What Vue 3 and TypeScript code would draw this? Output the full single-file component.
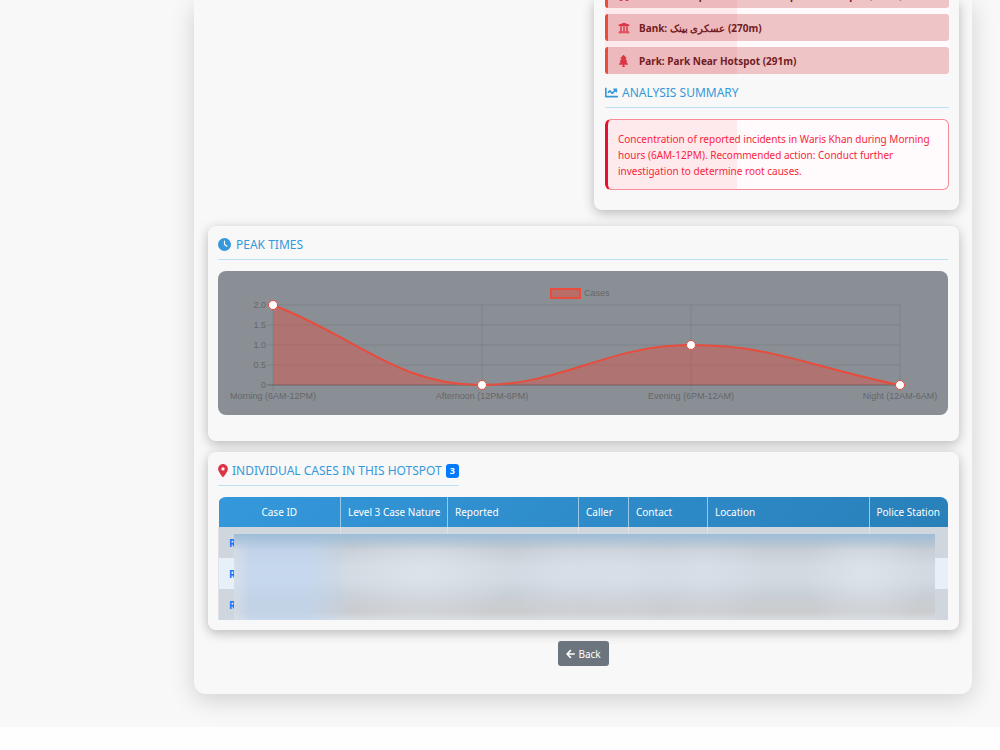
<script setup lang="ts">
interface Place {
  kind: string
  name: string
  distance: string
  viewBox: string
  icon: string
}

const places: Place[] = [
  {
    kind: 'Public Transport',
    name: 'Main Bus Stop Near Hotspot',
    distance: '250m',
    viewBox: '0 0 512 512',
    icon: 'M488 128h-8V80c0-44.800-99.200-80-224-80S32 35.200 32 80v48h-8c-13.250 0-24 10.740-24 24v80c0 13.250 10.750 24 24 24h8v160c0 17.670 14.330 32 32 32v32c0 17.670 14.330 32 32 32h64c17.670 0 32-14.330 32-32v-32h128v32c0 17.670 14.330 32 32 32h64c17.670 0 32-14.330 32-32v-32c17.670 0 32-14.330 32-32V256h8c13.250 0 24-10.750 24-24v-80c0-13.260-10.750-24-24-24zM112 400c-17.670 0-32-14.330-32-32s14.330-32 32-32 32 14.330 32 32-14.330 32-32 32zm16-112c-17.670 0-32-14.330-32-32V128c0-17.670 14.330-32 32-32h256c17.670 0 32 14.330 32 32v128c0 17.670-14.330 32-32 32H128zm272 112c-17.670 0-32-14.330-32-32s14.330-32 32-32 32 14.330 32 32-14.330 32-32 32z',
  },
  {
    kind: 'Bank',
    name: 'عسکری بینک',
    distance: '270m',
    viewBox: '0 0 512 512',
    icon: 'M496 128v16a8 8 0 0 1-8 8h-24v12c0 6.627-5.373 12-12 12H60c-6.627 0-12-5.373-12-12v-12H24a8 8 0 0 1-8-8v-16a8 8 0 0 1 4.941-7.392l232-88a7.996 7.996 0 0 1 6.118 0l232 88A8 8 0 0 1 496 128zm-24 304H40c-13.255 0-24 10.745-24 24v16a8 8 0 0 0 8 8h464a8 8 0 0 0 8-8v-16c0-13.255-10.745-24-24-24zM96 192v192H60c-6.627 0-12 5.373-12 12v20h416v-20c0-6.627-5.373-12-12-12h-36V192h-64v192h-64V192h-64v192h-64V192H96z',
  },
  {
    kind: 'Park',
    name: 'Park Near Hotspot',
    distance: '291m',
    viewBox: '0 0 384 512',
    icon: 'M378.31 378.49L298.42 288h30.63c9.01 0 16.98-5 20.78-13.06 3.8-8.04 2.55-17.26-3.28-24.05L268.42 160h28.89c9.1 0 17.3-5.35 20.86-13.61 3.52-8.13 1.86-17.59-4.24-24.08L203.66 4.83c-6.03-6.45-17.28-6.45-23.32 0L70.06 122.31c-6.1 6.49-7.75 15.95-4.24 24.08C69.38 154.65 77.59 160 86.69 160h28.89l-78.14 90.91c-5.81 6.78-7.06 15.99-3.27 24.04C37.97 283 45.93 288 54.95 288h30.63L5.69 378.49c-6 6.79-7.36 16.09-3.56 24.26 3.75 8.05 12 13.25 21.01 13.25H160v24.45l-30.29 48.4c-5.32 10.64 2.42 23.16 14.31 23.16h95.96c11.89 0 19.63-12.52 14.31-23.16L224 440.45V416h136.86c9.01 0 17.26-5.2 21.01-13.25 3.8-8.17 2.44-17.47-3.56-24.26z',
  },
]

const plot = { left: 55, right: 682, top: 34, bottom: 114 }
const ticks = ['2.0', '1.5', '1.0', '0.5', '0'].map((label, i) => ({
  label,
  y: plot.top + i * 20,
}))
const points = [
  { label: 'Morning (6AM-12PM)', x: 55, y: 34 },
  { label: 'Afternoon (12PM-6PM)', x: 264, y: 114 },
  { label: 'Evening (6PM-12AM)', x: 473, y: 74 },
  { label: 'Night (12AM-6AM)', x: 682, y: 114 },
]
const curve =
  'M55 34C139 66 178 114 264 114C345 114 389 74 473 74C557 74 598 98 682 114'

const columns = [
  { label: 'Case ID', cls: 'c-id' },
  { label: 'Level 3 Case Nature', cls: 'c-nature' },
  { label: 'Reported', cls: 'c-reported' },
  { label: 'Caller', cls: 'c-caller' },
  { label: 'Contact', cls: 'c-contact' },
  { label: 'Location', cls: 'c-location' },
  { label: 'Police Station', cls: 'c-station' },
]
const cases = [1, 2, 3]
</script>

<template>
  <div class="page">
    <main class="shell">
      <div class="top">
        <section class="card side">
          <ul class="places">
            <li v-for="p in places" :key="p.kind" class="place">
              <span class="place-icon">
                <svg :viewBox="p.viewBox" aria-hidden="true"><path :d="p.icon" /></svg>
              </span>
              <span>{{ p.kind }}: <bdi>{{ p.name }}</bdi> ({{ p.distance }})</span>
            </li>
          </ul>
          <h2 class="heading">
            <svg class="h-icon" viewBox="0 0 512 512" aria-hidden="true">
              <path d="M496 384H64V80c0-8.840-7.160-16-16-16H16C7.160 64 0 71.160 0 80v336c0 17.670 14.330 32 32 32h464c8.840 0 16-7.160 16-16v-32c0-8.840-7.160-16-16-16zM464 96H345.940c-21.380 0-32.090 25.850-16.970 40.970l32.400 32.400L288 242.750l-73.370-73.370c-12.500-12.500-32.760-12.500-45.250 0l-68.690 68.690c-6.250 6.250-6.250 16.380 0 22.630l22.620 22.620c6.250 6.250 16.380 6.250 22.630 0L192 237.250l73.370 73.370c12.500 12.500 32.760 12.500 45.250 0l96-96 32.400 32.400c15.120 15.120 40.970 4.410 40.970-16.970V112c.010-8.840-7.150-16-15.990-16z" />
            </svg>
            <span>ANALYSIS SUMMARY</span>
          </h2>
          <p class="summary">
            Concentration of reported incidents in Waris Khan during Morning hours (6AM-12PM).
            Recommended action: Conduct further investigation to determine root causes.
          </p>
        </section>
      </div>

      <section class="card peak">
        <h2 class="heading roomy">
          <svg class="h-icon" viewBox="0 0 512 512" aria-hidden="true">
            <path d="M256 0a256 256 0 1 1 0 512A256 256 0 1 1 256 0zM232 120V256c0 8 4 15.500 10.700 20l96 64c11 7.400 25.900 4.400 33.300-6.700s4.400-25.900-6.700-33.300L280 243.200V120c0-13.300-10.700-24-24-24s-24 10.700-24 24z" />
          </svg>
          <span>PEAK TIMES</span>
        </h2>
        <div class="chart">
          <svg viewBox="0 0 730 144" role="img" aria-label="Cases by time of day">
            <g class="grid">
              <line v-for="t in ticks" :key="t.label" x1="49" :x2="plot.right" :y1="t.y" :y2="t.y" />
              <line v-for="p in points" :key="p.label" :x1="p.x" :x2="p.x" :y1="plot.top" y2="120" />
            </g>
            <path class="area" :d="curve + 'L55 114Z'" />
            <line class="axis" x1="49" :x2="plot.right" :y1="plot.bottom" :y2="plot.bottom" />
            <path class="line" :d="curve" />
            <circle v-for="p in points" :key="p.label" class="dot" :cx="p.x" :cy="p.y" r="4.500" />
            <rect class="swatch" x="333" y="18" width="29" height="9" />
            <g class="labels">
              <text x="366" y="25">Cases</text>
              <text v-for="t in ticks" :key="t.label" x="48" :y="t.y + 3" text-anchor="end">{{ t.label }}</text>
              <text v-for="p in points" :key="p.label" :x="p.x" y="128" text-anchor="middle">{{ p.label }}</text>
            </g>
          </svg>
        </div>
      </section>

      <section class="card">
        <h2 class="heading fit">
          <svg class="pin" viewBox="0 0 384 512" aria-hidden="true">
            <path d="M215.700 499.200C267 435 384 279.400 384 192C384 86 298 0 192 0S0 86 0 192c0 87.400 117 243 168.300 307.200c12.300 15.300 35.100 15.300 47.400 0zM192 128a64 64 0 1 1 0 128 64 64 0 1 1 0-128z" />
          </svg>
          <span>INDIVIDUAL CASES IN THIS HOTSPOT</span>
          <span class="badge">3</span>
        </h2>
        <div class="table-box">
          <table>
            <thead>
              <tr>
                <th v-for="c in columns" :key="c.label" :class="c.cls" scope="col">{{ c.label }}</th>
              </tr>
            </thead>
            <tbody>
              <tr v-for="n in cases" :key="n">
                <td><a href="#">R</a></td>
                <td v-for="c in columns.slice(1)" :key="c.label"></td>
              </tr>
            </tbody>
          </table>
          <div class="redacted"></div>
        </div>
      </section>

      <button type="button" class="back">
        <svg viewBox="0 0 448 512" aria-hidden="true">
          <path d="M257.500 445.100l-22.200 22.200c-9.400 9.400-24.600 9.400-33.900 0L7 273c-9.400-9.400-9.400-24.600 0-33.900L201.400 44.700c9.400-9.400 24.600-9.400 33.900 0l22.200 22.200c9.500 9.500 9.300 25-.4 34.300L136.600 216H424c13.300 0 24 10.700 24 24v32c0 13.300-10.700 24-24 24H136.600l120.500 114.800c9.800 9.300 10 24.800.4 34.300z" />
        </svg>
        <span>Back</span>
      </button>
    </main>
  </div>
</template>

<style>
body {
  margin: 0;
  background: #fefefe;
}
</style>

<style scoped>
* {
  box-sizing: border-box;
}
.page {
  overflow: hidden;
  padding: 0 28px 33px 194px;
  background: #f8f8f8;
  font-family: 'Noto Sans', 'Open Sans', sans-serif;
  font-size: 11px;
}
.shell {
  display: flex;
  flex-direction: column;
  padding: 0 13px 28px 14px;
  border-radius: 0 0 12px 12px;
  background: #f8f8f8;
  box-shadow: 0 6px 24px rgba(0, 0, 0, 0.16);
}
.top {
  display: flex;
  justify-content: flex-end;
  margin-bottom: 16px;
}
.card {
  padding: 10px 11px 10px 10px;
  margin-bottom: 11px;
  border-radius: 8px;
  background: #f8f8f8;
  box-shadow: 0 3px 12px rgba(0, 0, 0, 0.26);
}
.side {
  width: 365px;
  margin: 0;
  padding: 0 10px 20px 11px;
  border-radius: 0 0 8px 8px;
}
.peak {
  padding-bottom: 26px;
}
.places {
  display: flex;
  flex-direction: column;
  gap: 6px;
  margin: -19px 0 10px;
  padding: 0;
  list-style: none;
  background: linear-gradient(90deg, #feeaec 132px, #fffafb 132px);
}
.place {
  display: flex;
  align-items: center;
  height: 27px;
  border-left: 3px solid #e74c3c;
  border-radius: 3px;
  background: linear-gradient(90deg, #edb9bd 129px, #eec4c6 129px);
  color: #721c24;
  font-size: 10px;
  font-weight: 700;
  white-space: nowrap;
}
.place-icon {
  display: flex;
  justify-content: center;
  width: 31px;
}
.place-icon svg {
  height: 12px;
  fill: #dc3545;
}
.heading {
  display: flex;
  align-items: center;
  gap: 4px;
  height: 24px;
  margin: 0 0 11px;
  padding-bottom: 6px;
  border-bottom: 1px solid #bfdff3;
  color: #3498db;
  font-size: 12px;
  font-weight: 400;
  line-height: 17px;
}
.roomy {
  gap: 5px;
}
.fit {
  width: fit-content;
}
.h-icon {
  width: 13px;
  height: 13px;
  fill: #3498db;
}
.pin {
  width: 10px;
  height: 13px;
  fill: #dc3545;
}
.badge {
  padding: 0 4px;
  border-radius: 3px;
  background: #007bff;
  color: #fff;
  font-size: 9px;
  font-weight: 700;
  line-height: 14px;
}
.summary {
  margin: 0;
  padding: 11px 9px 10px 10px;
  border: 1px solid #f98a98;
  border-left: 3px solid #e8112d;
  border-radius: 6px;
  background: linear-gradient(90deg, #feeaec 129px, #fffafb 129px);
  color: #fa1e3c;
  font-size: 10px;
  line-height: 16px;
}
.chart {
  overflow: hidden;
  border-radius: 8px;
  background: #8a8f96;
}
.chart svg {
  display: block;
  width: 100%;
}
.grid line {
  stroke: rgba(0, 0, 0, 0.08);
}
.axis {
  stroke: rgba(0, 0, 0, 0.2);
}
.area {
  fill: rgba(231, 76, 60, 0.4);
}
.line {
  fill: none;
  stroke: #e74c3c;
  stroke-width: 2;
}
.dot {
  fill: #fff;
  stroke: #e74c3c;
  stroke-width: 1;
}
.swatch {
  fill: rgba(231, 76, 60, 0.5);
  stroke: #e74c3c;
  stroke-width: 2;
}
.labels {
  fill: #666;
  font-family: 'Liberation Sans', Arial, sans-serif;
  font-size: 9px;
}
.table-box {
  position: relative;
  overflow: hidden;
  border-radius: 8px 8px 0 0;
}
table {
  width: 100%;
  table-layout: fixed;
  border-collapse: collapse;
}
thead {
  background: linear-gradient(135deg, #3498db, #2980b9);
}
th {
  height: 30px;
  padding: 0 7px;
  border-left: 1px solid #9ac8e6;
  color: #fff;
  font-size: 10px;
  font-weight: 400;
  text-align: left;
  white-space: nowrap;
}
th:first-child {
  border-left: 0;
  text-align: center;
}
td {
  height: 31px;
  padding: 0 10px;
  border-left: 1px solid #dee2e6;
  font-size: 10px;
}
tbody tr {
  background: #d0d6de;
}
tbody tr:nth-child(2) {
  background: #e7f0f9;
}
td a {
  color: #007bff;
  font-weight: 700;
  text-decoration: none;
}
.c-id { width: 122px; }
.c-nature { width: 107px; }
.c-reported { width: 131px; }
.c-caller { width: 50px; }
.c-contact { width: 79px; }
.c-station { width: 79px; }
.redacted {
  position: absolute;
  inset: 37px 13px 0 16px;
  background:
    linear-gradient(180deg, #9dbdd7 0, rgba(157, 189, 215, 0) 16px),
    radial-gradient(ellipse 90px 60px at 27% 45%, rgba(226, 233, 241, 0.6), transparent),
    radial-gradient(ellipse 60px 60px at 48% 45%, rgba(224, 231, 240, 0.4), transparent),
    radial-gradient(ellipse 50px 60px at 56% 45%, rgba(224, 231, 240, 0.4), transparent),
    radial-gradient(ellipse 60px 60px at 67% 45%, rgba(224, 231, 240, 0.4), transparent),
    radial-gradient(ellipse 60px 60px at 90% 48%, rgba(226, 233, 241, 0.6), transparent),
    linear-gradient(90deg, rgba(218, 228, 240, 0.6) 0, rgba(190, 215, 245, 0.6) 16px, rgba(190, 215, 245, 0.6) 76px, rgba(190, 215, 245, 0) 120px),
    linear-gradient(180deg, #c3c9d0 10px, #d2d9e1 32px, #d2d9e1 46px, #c9cfd6 62px, #cbccce 78px, #d9dde2 86px);
}
.back {
  display: flex;
  align-items: center;
  align-self: center;
  gap: 3px;
  height: 25px;
  padding: 0 8px;
  border: 0;
  border-radius: 3px;
  background: #6c757d;
  color: #fff;
  font: inherit;
  font-size: 10px;
}
.back svg {
  width: 9px;
  height: 10px;
  fill: #fff;
}
</style>
